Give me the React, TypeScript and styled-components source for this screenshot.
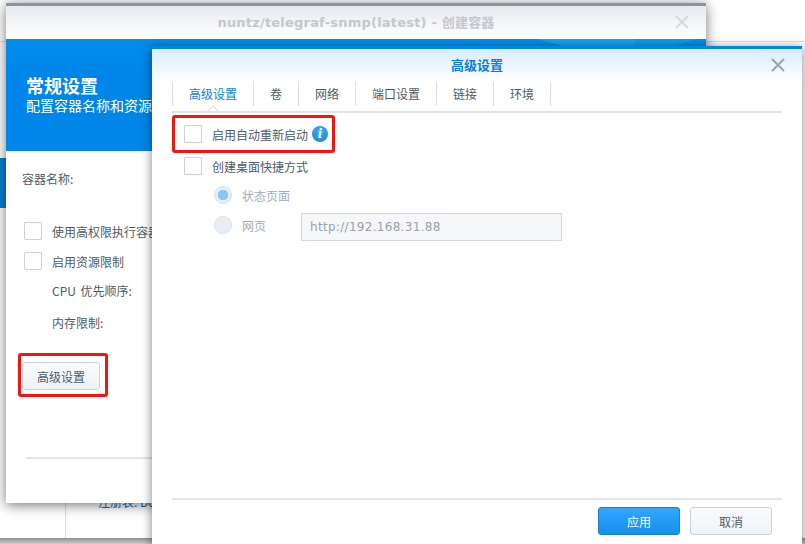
import { createGlobalStyle } from 'styled-components'
import styled from 'styled-components'

const Global = createGlobalStyle`
	html, body {
		margin: 0;
		height: 100%;
		overflow: hidden;
		background: #fff;
	}
	body {
		font-family: "Noto Sans CJK SC", "Liberation Sans", sans-serif;
		font-size: 12px;
		color: #505a64;
	}
	* {
		box-sizing: border-box;
	}
`

const Desktop = styled.div`
	position: relative;
	width: 805px;
	height: 544px;
	overflow: hidden;
	background: #fff;
`

/* what shows of the page behind the two dialogs */
const BackPage = styled.div`
	position: absolute;
	left: 0;
	top: 41px;
	width: 805px;
	height: 503px;
	border-top: 1px solid #d7e1ed;
`

const BlueSliver = styled.div`
	position: absolute;
	left: 0;
	top: 116px;
	width: 8px;
	height: 50px;
	background: #0a7fd8;
`

const PageDivider = styled.div`
	position: absolute;
	left: 65px;
	top: 440px;
	width: 1px;
	height: 56px;
	background: #d9dde2;
`

const RegistryText = styled.div`
	position: absolute;
	left: 98px;
	top: 451px;
	font-size: 12px;
	color: #0a6fc2;
`

const PageShade = styled.div`
	position: absolute;
	left: 0;
	right: 0;
	bottom: 0;
	height: 6px;
	background: linear-gradient(#8e8e8e, #cfcfcf);
`

const BackWindow = styled.section`
	position: absolute;
	left: 6px;
	top: 3px;
	width: 700px;
	height: 500px;
	background: #fff;
	border-top: 3px solid #8b949e;
	box-shadow: 0 2px 12px rgba(0, 0, 0, 0.55);
	display: flex;
	flex-direction: column;
`

const BackTitleBar = styled.header`
	position: relative;
	height: 33px;
	flex: none;
	background: linear-gradient(#e7eaee, #fff);
	display: flex;
	align-items: center;
	justify-content: center;
`

const BackTitle = styled.div`
	font-family: "DejaVu Sans", "Noto Sans CJK SC", sans-serif;
	font-size: 13px;
	font-weight: 700;
	letter-spacing: 0.2px;
	color: #c3c8ce;
	margin-top: -2px;
	white-space: nowrap;
`

const CloseIcon = styled.svg<{ $color: string }>`
	position: absolute;
	width: 14px;
	height: 14px;
	stroke: ${p => p.$color};
	stroke-width: 1.8;
	fill: none;
`

const BackClose = styled(CloseIcon)`
	right: 17px;
	top: 9px;
`

const BlueHeader = styled.div`
	position: relative;
	flex: none;
	height: 112px;
	padding: 35px 0 0 20px;
	color: #fff;
	background: linear-gradient(#008eeb, #0086e8 30%);

	&::before {
		content: '';
		position: absolute;
		left: 531px;
		top: 0;
		width: 160px;
		height: 8px;
		background: linear-gradient(90deg, #10a6f0 0 61%, #0a9cee 61%);
		clip-path: polygon(0 0, 100% 0, 84% 100%, 19% 100%);
	}
`

const HeaderTitle = styled.div`
	font-size: 18px;
	line-height: 22px;
	font-weight: 700;
`

const HeaderSub = styled.div`
	font-size: 14px;
	line-height: 18px;
	white-space: nowrap;
`

const BackBody = styled.div`
	flex: 1;
	display: flex;
	flex-direction: column;
	padding: 19px 0 0 16px;
`

const NameRow = styled.div`
	height: 18px;
	line-height: 18px;
`

const OptionList = styled.div`
	display: flex;
	flex-direction: column;
	margin-top: 28px;
	padding-left: 2px;
`

const OptionRow = styled.label`
	display: flex;
	align-items: center;
	gap: 10px;
	height: 30px;
	white-space: nowrap;
`

const SubLabel = styled.div<{ $first?: boolean }>`
	height: 32px;
	line-height: 32px;
	padding-left: 28px;
	word-spacing: 2px;
	margin-top: ${p => (p.$first ? '-1px' : '0')};
`

const Checkbox = styled.span`
	flex: none;
	width: 18px;
	height: 18px;
	background: #fff;
	border: 1px solid #c8d2de;
	border-radius: 1px;
`

const Highlight = styled.div`
	border: 3px solid #f5150f;
	border-radius: 3px;
`

const AdvancedBox = styled(Highlight)`
	align-self: flex-start;
	margin: 14px 0 0 -4px;
	padding: 6px 5px 4px 1px;
`

const Button = styled.button<{ $primary?: boolean }>`
	display: block;
	font: inherit;
	font-size: 12px;
	height: 28px;
	border-radius: 3px;
	color: ${p => (p.$primary ? '#fff' : '#505a64')};
	border: 1px solid ${p => (p.$primary ? '#1a80d0' : '#c8d3df')};
	background: ${p =>
		p.$primary
			? 'linear-gradient(#33a6ff, #158fec)'
			: 'linear-gradient(#f9fbfd, #eff4f9)'};
`

const AdvancedButton = styled(Button)`
	width: 78px;
`

const BackFooterLine = styled.div`
	margin: 60px 0 0 4px;
	height: 2px;
	background: #e3e5e7;
`

const FrontWindow = styled.section`
	position: absolute;
	left: 152px;
	top: 46px;
	width: 650px;
	height: 500px;
	background: #fff;
	border-top: 3px solid #0086e8;
	box-shadow: 0 2px 10px rgba(0, 0, 0, 0.5);
	display: flex;
	flex-direction: column;
`

const FrontTitleBar = styled.header`
	position: relative;
	flex: none;
	height: 33px;
	display: flex;
	align-items: center;
	justify-content: center;
	background: linear-gradient(#d9ecfb, #fff);
`

const FrontTitle = styled.div`
	font-size: 13px;
	font-weight: 700;
	color: #0a7fdc;
	margin-top: -3px;
`

const FrontClose = styled(CloseIcon)`
	right: 17px;
	top: 9px;
`

const Tabs = styled.nav`
	flex: none;
	display: flex;
	margin: 0 20px;
	height: 31px;
	border-bottom: 2px solid #e1e3e6;
`

const Tab = styled.div<{ $active?: boolean }>`
	position: relative;
	height: 24px;
	line-height: 24px;
	padding: 0 16px;
	white-space: nowrap;
	border-left: 1px solid #d8e1ea;
	color: ${p => (p.$active ? '#0a7fdc' : '#505a64')};
	&:last-child {
		border-right: 1px solid #d8e1ea;
	}
`

const TabCaret = styled.span`
	position: absolute;
	left: 50%;
	bottom: -5px;
	margin-left: -6px;
	width: 12px;
	height: 6px;
	background: #e1e3e6;
	clip-path: polygon(50% 0, 100% 100%, 0 100%);
	&::after {
		content: '';
		position: absolute;
		left: 1.5px;
		top: 1.5px;
		width: 9px;
		height: 5px;
		background: #fff;
		clip-path: polygon(50% 0, 100% 100%, 0 100%);
	}
`

const FrontBody = styled.div`
	flex: 1;
	display: flex;
	flex-direction: column;
	padding: 2px 20px 0 32px;
`

const RestartBox = styled(Highlight)`
	align-self: flex-start;
	display: flex;
	align-items: center;
	gap: 10px;
	height: 38px;
	margin-left: -12px;
	padding: 0 4px 0 9px;
`

const InfoIcon = styled.span`
	flex: none;
	width: 16px;
	height: 16px;
	margin-left: -6px;
	border-radius: 50%;
	background: radial-gradient(circle at 50% 30%, #4aa8ee, #1580dc);
	color: #fff;
	font: italic 700 12px/16px "DejaVu Serif", serif;
	text-align: center;
`

const ShortcutRow = styled(OptionRow)`
	margin-top: -2px;
`

const SubOptions = styled.div`
	display: flex;
	flex-direction: column;
	margin-top: -1px;
	padding-left: 30px;
	color: #a4acb5;
`

const RadioRow = styled.label`
	display: flex;
	align-items: center;
	gap: 10px;
	height: 30px;
	white-space: nowrap;
`

const Radio = styled.span<{ $checked?: boolean }>`
	flex: none;
	width: 18px;
	height: 18px;
	border-radius: 50%;
	border: 1px solid #d7e1ec;
	background: ${p =>
		p.$checked
			? 'radial-gradient(circle, #8cc6f5 0 5px, #e8eef4 5.5px)'
			: '#e8eef4'};
`

const UrlInput = styled.div`
	width: 261px;
	height: 28px;
	margin: 4px 0 0 25px;
	padding-left: 8px;
	line-height: 26px;
	font-family: "DejaVu Sans", sans-serif;
	font-size: 12px;
	letter-spacing: 0.3px;
	color: #9aa3ac;
	background: #f5f7f9;
	border: 1px solid #d0d8e1;
`

const FrontFooter = styled.footer`
	flex: none;
	height: 48px;
	margin: 0 20px;
	border-top: 2px solid #e3e5e7;
	display: flex;
	justify-content: flex-end;
	gap: 10px;
	padding: 7px 10px 0 0;
`

const FooterButton = styled(Button)`
	width: 82px;
`

const closePath = 'M1 1 13 13M13 1 1 13'

export default function App() {
	return (
		<Desktop>
			<Global />
			<BackPage>
				<BlueSliver />
				<PageDivider />
				<RegistryText>注册表: Docker</RegistryText>
				<PageShade />
			</BackPage>

			<BackWindow>
				<BackTitleBar>
					<BackTitle>nuntz/telegraf-snmp(latest) - 创建容器</BackTitle>
					<BackClose $color="#d5d9dd" viewBox="0 0 14 14">
						<path d={closePath} />
					</BackClose>
				</BackTitleBar>
				<BlueHeader>
					<HeaderTitle>常规设置</HeaderTitle>
					<HeaderSub>配置容器名称和资源限制</HeaderSub>
				</BlueHeader>
				<BackBody>
					<NameRow>容器名称:</NameRow>
					<OptionList>
						<OptionRow>
							<Checkbox />
							使用高权限执行容器
						</OptionRow>
						<OptionRow>
							<Checkbox />
							启用资源限制
						</OptionRow>
						<SubLabel $first>CPU 优先顺序:</SubLabel>
						<SubLabel>内存限制:</SubLabel>
					</OptionList>
					<AdvancedBox>
						<AdvancedButton>高级设置</AdvancedButton>
					</AdvancedBox>
					<BackFooterLine />
				</BackBody>
			</BackWindow>

			<FrontWindow>
				<FrontTitleBar>
					<FrontTitle>高级设置</FrontTitle>
					<FrontClose $color="#99a2ab" viewBox="0 0 14 14">
						<path d={closePath} />
					</FrontClose>
				</FrontTitleBar>
				<Tabs>
					<Tab $active>
						高级设置
						<TabCaret />
					</Tab>
					<Tab>卷</Tab>
					<Tab>网络</Tab>
					<Tab>端口设置</Tab>
					<Tab>链接</Tab>
					<Tab>环境</Tab>
				</Tabs>
				<FrontBody>
					<RestartBox>
						<Checkbox />
						启用自动重新启动
						<InfoIcon>i</InfoIcon>
					</RestartBox>
					<ShortcutRow>
						<Checkbox />
						创建桌面快捷方式
					</ShortcutRow>
					<SubOptions>
						<RadioRow>
							<Radio $checked />
							状态页面
						</RadioRow>
						<RadioRow>
							<Radio />
							网页
							<UrlInput>http://192.168.31.88</UrlInput>
						</RadioRow>
					</SubOptions>
				</FrontBody>
				<FrontFooter>
					<FooterButton $primary>应用</FooterButton>
					<FooterButton>取消</FooterButton>
				</FrontFooter>
			</FrontWindow>
		</Desktop>
	)
}
